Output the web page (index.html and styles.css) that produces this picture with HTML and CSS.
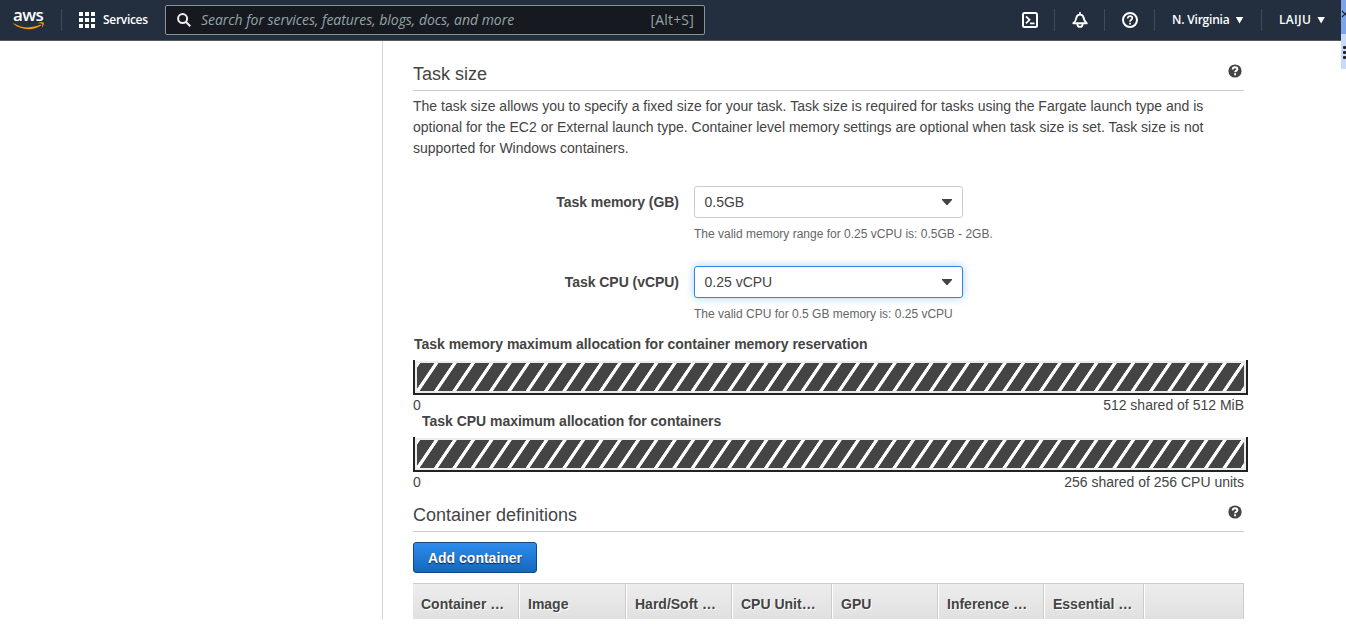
FILE: index.html
```html
<!DOCTYPE html>
<html lang="en">
<head>
<meta charset="utf-8">
<title>Task definition</title>
<link rel="stylesheet" href="styles.css">
</head>
<body>
<header class="topbar">
  <div class="logo">
    <span class="logo-text">aws</span>
    <svg class="logo-smile" width="32" height="8" viewBox="0 0 32 8"><path d="M.6 1.2C9 6.400 18.500 6.600 27.500 2.600l.7 1C20 9 8 8.400.3 1.800z" fill="#f90"/><path d="M24.600 1.300C26.500.2 30 .1 30.700.8c.5.800-.3 3.600-1.800 4.900.1-1.600.7-2.900.3-3.700-.8-.6-2.900-.5-4.600-.7z" fill="#f90"/></svg>
  </div>
  <span class="divider"></span>
  <div class="services">
    <svg width="16" height="16" viewBox="0 0 16 16" fill="#fff"><path d="M0 0h4v4H0zM6 0h4v4H6zM12 0h4v4h-4zM0 6h4v4H0zM6 6h4v4H6zM12 6h4v4h-4zM0 12h4v4H0zM6 12h4v4H6zM12 12h4v4h-4z"/></svg>
    <span>Services</span>
  </div>
  <div class="search">
    <svg width="14" height="14" viewBox="0 0 14 14" fill="none" stroke="#eee" stroke-width="2"><circle cx="5.600" cy="5.600" r="4.500"/><path d="M9 9l4.300 4.300"/></svg>
    <span class="search-hint">Search for services, features, blogs, docs, and more</span>
    <span class="search-key">[Alt+S]</span>
  </div>
  <div class="tools">
    <div class="tool"><svg width="16" height="16" viewBox="0 0 16 16" fill="none" stroke="#fff" stroke-width="2"><rect x="1" y="1" width="14" height="14" rx="1.500"/><path d="M4 4.300L7.500 7.800 4 11.300M8 11.400h4.500" stroke-width="1.800"/></svg></div>
    <div class="tool"><svg width="16" height="16" viewBox="0 0 16 16" fill="none" stroke="#fff" stroke-width="1.900" stroke-linejoin="round"><path d="M1.300 11.300C3.500 9.500 4 8.500 4.300 6c.3-2.200 1.600-3.400 3.700-3.400s3.400 1.200 3.700 3.400c.3 2.500.8 3.500 3 5.300zM8 2.600V.3M5.300 11.800c.2 2 1.200 3.100 2.700 3.100s2.500-1.100 2.700-3.100"/></svg></div>
    <div class="tool"><svg width="16" height="16" viewBox="0 0 16 16" fill="none" stroke="#fff" stroke-width="2"><circle cx="8" cy="8" r="7"/><path d="M5.700 6.500C5.700 4.900 6.600 4.200 8 4.200s2.300.8 2.300 2C10.300 7.700 8 7.800 8 9.700M8 10.700v1.800" stroke-width="1.700"/></svg></div>
    <div class="menu region"><span>N. Virginia</span><i class="caret"></i></div>
    <div class="menu user"><span>LAIJU</span><i class="caret"></i></div>
  </div>
  <div class="side-strip">
    <div class="strip-top"><svg width="5" height="8" viewBox="0 0 5 8" fill="none" stroke="#223" stroke-width="1.200"><path d="M1 1l6 6M1 7l6-6"/></svg></div>
    <div class="strip-bottom"><i></i><i></i><i></i></div>
  </div>
</header>
<svg class="defs" width="0" height="0">
  <defs>
    <symbol id="help" viewBox="0 0 14 14"><circle cx="7" cy="7" r="6.600" fill="#444"/><path d="M4.700 5.400C4.700 3.900 5.600 3.200 7 3.200s2.400.8 2.400 2C9.400 6.600 7.100 6.700 7.100 8.300M7.100 9.200v2" fill="none" stroke="#fff" stroke-width="1.900"/></symbol>
  </defs>
</svg>
<div class="page">
  <aside class="sidebar"></aside>
  <main class="content">
    <div class="section-head"><h2>Task size</h2><svg class="help"><use href="#help"/></svg></div>
    <p class="intro">The task size allows you to specify a fixed size for your task. Task size is required for tasks using the Fargate launch type and is<br>optional for the EC2 or External launch type. Container level memory settings are optional when task size is set. Task size is not<br>supported for Windows containers.</p>
    <div class="field">
      <label>Task memory (GB)</label>
      <div class="control">
        <div class="select"><span>0.5GB</span><svg width="10" height="6" viewBox="0 0 10 6"><path d="M0 0h10v1L5.500 6h-1L0 1z" fill="#444"/></svg></div>
        <div class="note">The valid memory range for 0.25 vCPU is: 0.5GB - 2GB.</div>
      </div>
    </div>
    <div class="field">
      <label>Task CPU (vCPU)</label>
      <div class="control">
        <div class="select focused"><span>0.25 vCPU</span><svg width="10" height="6" viewBox="0 0 10 6"><path d="M0 0h10v1L5.500 6h-1L0 1z" fill="#444"/></svg></div>
        <div class="note">The valid CPU for 0.5 GB memory is: 0.25 vCPU</div>
      </div>
    </div>
    <div class="meters">
      <section class="meter">
        <h3>Task memory maximum allocation for container memory reservation</h3>
        <div class="bar"><div class="bar-fill"></div></div>
        <div class="scale"><span>0</span><span>512 shared of 512 MiB</span></div>
      </section>
      <section class="meter">
        <h3 class="indented">Task CPU maximum allocation for containers</h3>
        <div class="bar"><div class="bar-fill"></div></div>
        <div class="scale"><span>0</span><span>256 shared of 256 CPU units</span></div>
      </section>
    </div>
    <div class="section-head"><h2>Container definitions</h2><svg class="help"><use href="#help"/></svg></div>
    <button class="primary">Add container</button>
    <div class="table-head">
      <span>Container …</span><span>Image</span><span>Hard/Soft …</span><span>CPU Unit…</span><span>GPU</span><span>Inference …</span><span>Essential …</span><span></span>
    </div>
  </main>
</div>
</body>
</html>
```

FILE: styles.css
```css
* { box-sizing: border-box; }
body { margin: 0; width: 1346px; height: 636px; overflow: hidden; background: #fff; color: #444; font: 14px/21px "Liberation Sans", Arial, sans-serif; }
svg { display: block; flex: none; }
.defs { position: absolute; }

.topbar { position: relative; display: flex; align-items: center; width: 1341px; height: 41px; background: #232f3e; border-bottom: 1px solid #545b64; color: #fff; font: 600 12px/16px "Open Sans", "Noto Sans", sans-serif; white-space: nowrap; }
.logo { width: 61px; height: 40px; padding: 8px 0 0 13px; }
.logo-text { display: block; height: 14px; font: 600 17px/13px "Open Sans", sans-serif; letter-spacing: -0.6px; }
.divider { width: 1px; height: 22px; background: #414b58; }
.services { display: flex; align-items: center; gap: 8px; width: 103px; padding-left: 17px; }
.services span { letter-spacing: -0.3px; }
.search { display: flex; align-items: center; width: 540px; height: 30px; padding: 0 10px 0 11px; border: 1px solid #879596; border-radius: 2px; background: #16191f; color: #95a5a6; font-weight: 400; font-size: 14px; }
.search-hint { flex: 1; padding-left: 10px; font-style: italic; letter-spacing: -0.04px; }
.search-key { letter-spacing: 0.2px; }
.tools { display: flex; align-items: center; margin-left: 300px; }
.tool { display: flex; align-items: center; justify-content: center; width: 50px; height: 22px; border-right: 1px solid #414b58; }
.menu { display: flex; align-items: center; height: 22px; letter-spacing: -0.2px; }
.region { width: 107px; padding-left: 17px; gap: 6px; border-right: 1px solid #414b58; }
.user { padding-left: 17px; gap: 6px; letter-spacing: 0.3px; }
.caret { width: 8px; height: 7px; background: #fff; clip-path: polygon(0 0, 100% 0, 50% 100%); }
.side-strip { position: absolute; left: 1341px; top: 0; width: 5px; }
.strip-top { height: 34px; padding-top: 10px; background: #7ba5e8; overflow: hidden; }
.strip-bottom { display: flex; flex-direction: column; gap: 2px; height: 35px; padding: 12px 0 0 2px; background: #c9daf8; }
.strip-bottom i { width: 3px; height: 3px; border-radius: 1px; background: #222; }

.page { display: flex; height: 578px; overflow: hidden; }
.sidebar { width: 383px; border-right: 1px solid #d5d5d5; }
.content { width: 865px; padding: 20px 0 0 30px; }
.section-head { display: flex; justify-content: space-between; width: 831px; height: 30px; border-bottom: 1px solid #ccc; }
h2 { margin: 0; font-size: 18px; font-weight: 400; line-height: 26px; }
.help { width: 14px; height: 14px; margin: 3px 2px 0 0; }
.intro { margin: 5px 0 27px; width: 831px; white-space: nowrap; }
.field { display: flex; height: 80px; }
.field label { width: 266px; margin-right: 15px; text-align: right; font-weight: 700; line-height: 32px; letter-spacing: -0.04px; }
.control { width: 340px; }
.select { display: flex; align-items: center; justify-content: space-between; width: 269px; height: 32px; padding: 0 10px 0 9.500px; border: 1px solid #ccc; border-radius: 3px; background: #fff; }
.select svg { margin-top: -1px; }
.focused { border-color: #2e86de; box-shadow: 0 0 8px rgba(46, 134, 222, .4); }
.note { margin-top: 6px; color: #666; font-size: 12px; line-height: 20px; }
.meters { height: 166px; margin-top: -10px; }
.meter { height: 77px; }
.meter h3 { margin: 0; padding-left: 1px; height: 14px; font-size: 14px; line-height: 16px; letter-spacing: -0.02px; }
.meter h3.indented { padding-left: 9px; }
.bar { width: 835px; height: 35px; margin-top: 10px; border: 2px solid #222; border-top: 0; padding: 3px 0 0 2px; background: linear-gradient(#fff 1px, #e9eded 1px); }
.bar-fill { width: 827px; height: 28px; background: repeating-linear-gradient(124.160deg, #fff 0, #fff 2.300px, #444 3px, #444 14.200px, #fff 14.800px, #fff 15.171px); }
.scale { display: flex; justify-content: space-between; width: 831px; height: 20px; line-height: 20px; }
.primary { display: block; width: 124px; height: 31px; margin-top: 10px; padding: 0; border: 1px solid #0d4a86; border-radius: 3px; background: linear-gradient(#2e8dee, #1467bd); color: #fff; font: 700 14px/28px "Liberation Sans", Arial, sans-serif; text-shadow: 0 1px 1px #123; }
.table-head { display: grid; grid-template-columns: 106px 107px 106px 100px 106px 106px 100px 100px; width: 831px; height: 60px; margin-top: 10px; border-top: 1px solid #ccc; background: linear-gradient(#ededed, #e0e0e0 36px); font-weight: 700; text-shadow: 1px 1px #fff; }
.table-head span { padding: 10px 0 0 9px; border-right: 1px solid #ccc; box-shadow: inset 1px 0 #fff; white-space: nowrap; }
.table-head span:first-child { padding-left: 8px; box-shadow: none; }
```
